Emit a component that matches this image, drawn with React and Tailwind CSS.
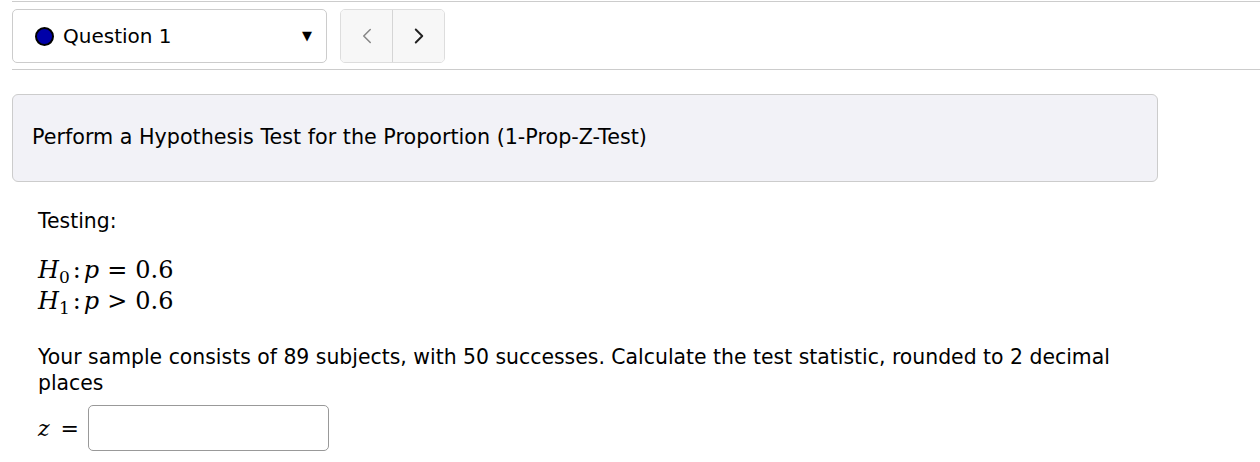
import { ChevronLeft, ChevronRight } from 'lucide-react';

const sans = { fontFamily: '"DejaVu Sans", sans-serif' };
const serif = { fontFamily: '"DejaVu Serif", serif' };

function MathLine({ sub, op }) {
  return (
    <div className="leading-[29px]">
      <i>H</i>
      <span className="text-[17px] relative top-[5px]">{sub}</span>
      <span className="mx-[3px]">:</span>
      <i>p</i>
      <span className="mx-[8px]">{op}</span>
      <span>0.6</span>
    </div>
  );
}

export default function App() {
  return (
    <div className="w-[1260px] h-[462px] bg-white text-black overflow-hidden" style={sans}>
      <div className="ml-[12px] border-t border-[#cccccc] mt-[1px]" />

      {/* Question picker */}
      <div className="flex items-center gap-[13px] ml-[12px] pt-[7px] pb-[6px] border-b border-[#cccccc]">
        <div className="w-[315px] h-[54px] border border-[#cccccc] rounded-[5px] flex items-center pl-[22px] pr-[14px]">
          <span className="w-[19px] h-[19px] rounded-full bg-[#0000a8] border-[2px] border-black" />
          <span className="ml-[9px] text-[20px] flex-1">Question 1</span>
          <span className="text-[13px]">▼</span>
        </div>
        <div className="flex h-[54px] border border-[#dddddd] rounded-[5px] overflow-hidden">
          <div className="w-[52px] bg-[#f7f7f7] flex items-center justify-center border-r border-[#d5d5d5]">
            <ChevronLeft size={26} strokeWidth={1.4} className="text-[#888]" />
          </div>
          <div className="w-[51px] bg-[#f7f7f7] flex items-center justify-center">
            <ChevronRight size={26} strokeWidth={1.8} className="text-[#222]" />
          </div>
        </div>
      </div>

      <div className="pl-[12px] pt-[24px]">
        <div className="w-[1146px] h-[88px] bg-[#f2f2f7] border border-[#cccccc] rounded-[6px] flex items-center pl-[19px]">
          <span className="text-[20.7px]">Perform a Hypothesis Test for the Proportion (1-Prop-Z-Test)</span>
        </div>
      </div>

      <div className="pl-[38px] w-[1140px] pt-[26px]">
        <div className="text-[20.4px] leading-[26px]">Testing:</div>
        <div className="mt-[22px] text-[24px]" style={serif}>
          <MathLine sub="0" op="=" />
          <MathLine sub="1" op=">" />
        </div>
        <p className="mt-[26px] text-[20.4px] leading-[26px]">
          Your sample consists of 89 subjects, with 50 successes. Calculate the test statistic, rounded to 2 decimal places
        </p>
        <div className="mt-[9px] flex items-center">
          <span className="text-[22px] w-[50px]" style={serif}>
            <i>z</i> <span className="ml-[4px]">=</span>
          </span>
          <div className="w-[241px] h-[46px] border border-[#999999] rounded-[5px]" />
        </div>
      </div>
    </div>
  );
}
